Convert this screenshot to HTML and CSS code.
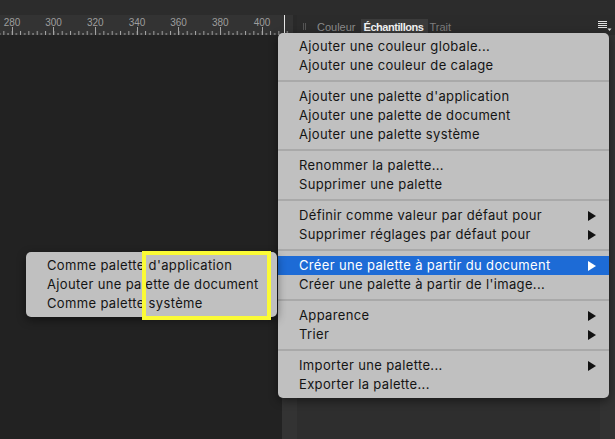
FILE: index.html
```html
<!DOCTYPE html>
<html lang="fr">
<head>
<meta charset="utf-8">
<title>Échantillons</title>
<link rel="stylesheet" href="styles.css">
</head>
<body>
<div class="app">
  <div class="topstrip"></div>
  <div class="toprow">
    <div class="ruler">
      <svg width="293" height="20" viewBox="0 0 293 20">
        <defs>
          <pattern id="ticks" x="11.7" y="0" width="8.3333" height="20" patternUnits="userSpaceOnUse">
            <rect x="0" y="16" width="1" height="4" fill="#a3a3a3"/>
            <rect x="4.1667" y="18" width="1" height="2" fill="#a3a3a3"/>
          </pattern>
        </defs>
        <rect x="0" y="0" width="293" height="20" fill="url(#ticks)" shape-rendering="crispEdges"/>
        <g fill="#a3a3a3" shape-rendering="crispEdges">
          <rect x="11.7" y="12" width="1" height="8"/>
          <rect x="53.4" y="12" width="1" height="8"/>
          <rect x="95" y="12" width="1" height="8"/>
          <rect x="136.7" y="12" width="1" height="8"/>
          <rect x="178.4" y="12" width="1" height="8"/>
          <rect x="220" y="12" width="1" height="8"/>
          <rect x="261.7" y="12" width="1" height="8"/>
        </g>
        <rect x="284" y="0" width="1" height="20" fill="#e6e6e6"/>
        <g class="rlabels" fill="#9d9d9d" text-anchor="middle">
          <text x="12" y="10.5">280</text>
          <text x="53.6" y="10.5">300</text>
          <text x="95.3" y="10.5">320</text>
          <text x="137" y="10.5">340</text>
          <text x="178.6" y="10.5">360</text>
          <text x="220.3" y="10.5">380</text>
          <text x="262" y="10.5">400</text>
        </g>
      </svg>
    </div>
    <div class="rulergap"></div>
    <div class="tabs">
      <span class="grip"></span>
      <span class="tab first">Couleur</span>
      <span class="tab active">Échantillons</span>
      <span class="tab dim">Trait</span>
      <span class="menuicon">
        <svg width="14" height="11" viewBox="0 0 14 11">
          <g fill="#e0e0e0" shape-rendering="crispEdges">
            <rect x="0" y="0" width="9" height="1"/>
            <rect x="0" y="2" width="9" height="1"/>
            <rect x="0" y="4" width="9" height="1"/>
            <rect x="0" y="6" width="9" height="1"/>
          </g>
          <path d="M9.5 7.5 L13.5 7.5 L11.5 10 Z" fill="#e0e0e0"/>
        </svg>
      </span>
    </div>
  </div>
  <div class="body">
    <div class="canvas"></div>
    <div class="strip"></div>
    <div class="panel"></div>
    <div class="panel-edge"></div>
  </div>
</div>

<div class="menu main-menu">
  <div class="item">Ajouter une couleur globale...</div>
  <div class="item">Ajouter une couleur de calage</div>
  <div class="sep"></div>
  <div class="item">Ajouter une palette d'application</div>
  <div class="item">Ajouter une palette de document</div>
  <div class="item">Ajouter une palette système</div>
  <div class="sep"></div>
  <div class="item">Renommer la palette...</div>
  <div class="item">Supprimer une palette</div>
  <div class="sep"></div>
  <div class="item">Définir comme valeur par défaut pour<span class="arrow"></span></div>
  <div class="item">Supprimer réglages par défaut pour<span class="arrow"></span></div>
  <div class="sep"></div>
  <div class="item selected">Créer une palette à partir du document<span class="arrow"></span></div>
  <div class="item">Créer une palette à partir de l'image...</div>
  <div class="sep"></div>
  <div class="item">Apparence<span class="arrow"></span></div>
  <div class="item">Trier<span class="arrow"></span></div>
  <div class="sep"></div>
  <div class="item">Importer une palette...<span class="arrow"></span></div>
  <div class="item">Exporter la palette...</div>
</div>

<div class="menu sub-menu">
  <div class="item">Comme palette d'application</div>
  <div class="item">Ajouter une palette de document</div>
  <div class="item">Comme palette système</div>
</div>

<div class="mark-box"></div>
</body>
</html>
```

FILE: styles.css
```css
html, body {
  margin: 0;
  padding: 0;
}
body {
  width: 615px;
  height: 439px;
  overflow: hidden;
  background: #222222;
  position: relative;
  font-family: "Liberation Sans", Arial, sans-serif;
}
.app {
  display: flex;
  flex-direction: column;
  height: 439px;
}
.topstrip {
  height: 15px;
  background: #2c2c2c;
}
.toprow {
  display: flex;
  height: 20px;
  background: #2b2b2b;
}
.ruler {
  width: 293px;
  height: 20px;
  background: #333333;
}
.ruler svg {
  display: block;
}
.rlabels {
  font-family: "Liberation Sans", Arial, sans-serif;
  font-size: 10px;
}
.rulergap {
  width: 4px;
  background: #292929;
}
.tabs {
  flex: 1;
  display: flex;
  align-items: center;
  padding-left: 6px;
  font-size: 11px;
  position: relative;
}
.grip {
  width: 3px;
  height: 7px;
  border-left: 1px solid #555;
  border-right: 1px solid #555;
  box-sizing: border-box;
  margin-right: 11px;
  margin-top: 2px;
}
.tab {
  color: #8a8a8a;
  padding: 0 3px;
  height: 16px;
  line-height: 17px;
  margin-top: 3px;
}
.tab.first {
  padding-left: 0;
}
.tab.active {
  background: #3b3b3b;
  color: #f2f2f2;
  font-weight: bold;
  letter-spacing: -0.45px;
  margin-left: 2px;
  padding: 0 4px 0 3px;
}
.tab.dim {
  color: #7c7c7c;
  margin-left: 0;
  padding-left: 2px;
}
.menuicon {
  margin-left: auto;
  margin-right: 3px;
  margin-top: 2px;
  display: flex;
}
.body {
  flex: 1;
  display: flex;
}
.canvas {
  width: 282px;
  background: #222222;
}
.strip {
  width: 15px;
  background: #333333;
}
.panel {
  flex: 1;
  background: #2e2e2e;
}
.panel-edge {
  width: 15px;
  background: #323232;
}

.menu {
  position: absolute;
  background: #c0c0c0;
  border-radius: 5px;
  padding: 4px 0;
  box-shadow: 0 3px 10px rgba(0, 0, 0, 0.45);
  font-family: Inter, "Liberation Sans", Arial, sans-serif;
  font-size: 13px;
  letter-spacing: 0.35px;
  color: #141414;
}
.main-menu {
  left: 278px;
  top: 33px;
  width: 331px;
}
.sub-menu {
  left: 26px;
  top: 252px;
  width: 251px;
}
.item {
  height: 19px;
  line-height: 19px;
  padding: 0 13px 0 21px;
  display: flex;
  align-items: center;
  justify-content: space-between;
  white-space: nowrap;
}
.item.selected {
  background: #1d6bd6;
  color: #ffffff;
}
.sep {
  height: 2px;
  margin: 5px 0;
  background: #a9a9a9;
}
.arrow {
  width: 0;
  height: 0;
  border-left: 8px solid #111;
  border-top: 5px solid transparent;
  border-bottom: 5px solid transparent;
}
.item.selected .arrow {
  border-left-color: #ffffff;
}
.mark-box {
  position: absolute;
  left: 142px;
  top: 251px;
  width: 129px;
  height: 69px;
  box-sizing: border-box;
  border: 4px solid #fbfb36;
}
```
